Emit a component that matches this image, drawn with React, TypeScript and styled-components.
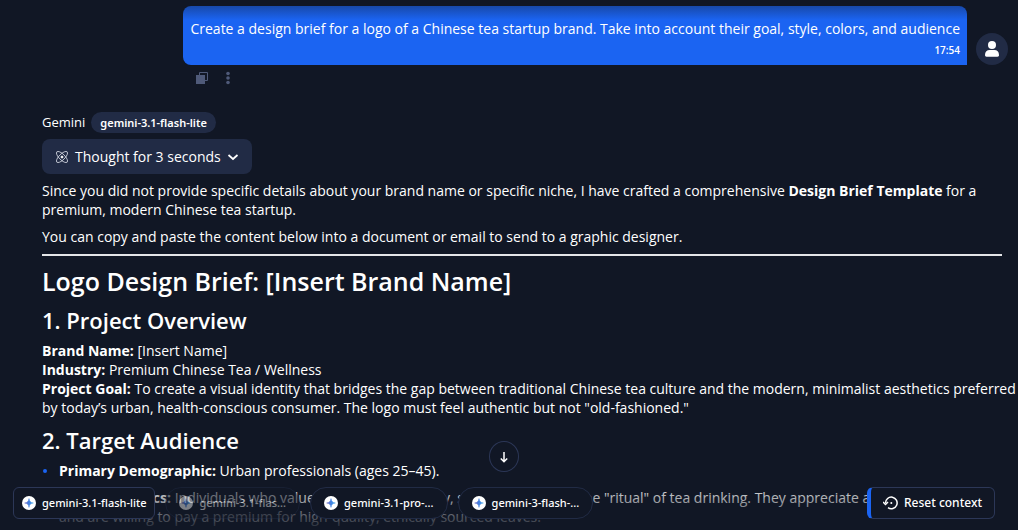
import React from "react";
import styled, { createGlobalStyle } from "styled-components";

const GlobalStyle = createGlobalStyle`
  *, *::before, *::after { box-sizing: border-box; }
  body {
    margin: 0;
    background: #111725;
    color: #fff;
    font: 400 14px/19px "Open Sans", "Noto Sans", sans-serif;
  }
  button { font: inherit; color: inherit; cursor: pointer; }
`;

const Page = styled.div`
  position: relative;
  height: 100vh;
  overflow: hidden;
  white-space: nowrap;
`;

const TopFade = styled.div`
  position: absolute;
  top: 0;
  left: 0;
  right: 0;
  height: 20px;
  background: linear-gradient(rgba(17, 23, 37, 0.5), rgba(17, 23, 37, 0));
  pointer-events: none;
`;

const UserRow = styled.section`
  display: flex;
  justify-content: flex-end;
  align-items: flex-start;
  gap: 9px;
  padding: 6px 10px 0 0;
`;

const Bubble = styled.div`
  display: flex;
  flex-direction: column;
  height: 59px;
  padding: 13px 7px 0;
  border-radius: 8px 8px 0 8px;
  background: #1b64f2;
`;

const Time = styled.time`
  align-self: flex-end;
  font-size: 10px;
  font-weight: 600;
  line-height: 25px;
`;

const Avatar = styled.div`
  display: flex;
  align-items: center;
  justify-content: center;
  width: 32px;
  height: 32px;
  margin-top: 27px;
  border-radius: 50%;
  background: #212b45;
`;

const Actions = styled.div`
  display: flex;
  gap: 16px;
  padding: 6px 0 0 13px;
`;

const IconButton = styled.button`
  display: flex;
  padding: 0;
  border: 0;
  background: none;
  color: #4f5a79;
`;

const Answer = styled.main`
  padding: 27px 16px 0 42px;
`;

const Author = styled.header`
  display: flex;
  align-items: center;
  gap: 6px;
  height: 21px;
  font-size: 13px;
`;

const ModelTag = styled.span`
  height: 21px;
  padding: 0 9px;
  border-radius: 11px;
  background: #212b45;
  font: 600 11px/21px "Noto Sans", sans-serif;
`;

const ThoughtButton = styled.button`
  display: flex;
  align-items: center;
  gap: 6px;
  height: 35px;
  margin: 6px 0 7px;
  padding: 0 13px;
  border: 0;
  border-radius: 8px;
  background: #212b45;
`;

const Paragraph = styled.p`
  margin: 0 0 8px;
`;

const Rule = styled.hr`
  height: 2px;
  margin: 0;
  border: 0;
  background: #e4e5e8;
`;

const Title = styled.h1`
  margin: 8px 0 0;
  font-size: 25px;
  font-weight: 600;
  line-height: 34px;
`;

const Heading = styled.h2`
  margin: 7px 0 6px;
  font-size: 22px;
  font-weight: 600;
  line-height: 30px;
`;

const List = styled.ul`
  margin: 0;
  padding: 0;
  list-style: none;
`;

const Item = styled.li`
  position: relative;
  margin-bottom: 8px;
  padding-left: 17px;

  &::before {
    content: "";
    position: absolute;
    top: 8px;
    left: 1px;
    width: 4px;
    height: 4px;
    border-radius: 50%;
    background: #1b64f2;
  }
`;

const BottomFade = styled.div`
  position: absolute;
  left: 0;
  right: 0;
  bottom: 0;
  height: 50px;
  background: linear-gradient(rgba(17, 23, 37, 0), rgba(17, 23, 37, 0.95));
  pointer-events: none;
`;

const ScrollDown = styled.button`
  position: absolute;
  left: calc(50% - 20px);
  bottom: 58px;
  display: flex;
  align-items: center;
  justify-content: center;
  width: 30px;
  height: 31px;
  padding: 0;
  border: 1px solid #2c3757;
  border-radius: 50%;
  background: #111725;
`;

const Footer = styled.footer`
  position: absolute;
  left: 13px;
  right: 23px;
  bottom: 11px;
  display: flex;
  align-items: center;
  justify-content: space-between;
`;

const Models = styled.nav`
  display: flex;
  gap: 10px;
`;

const Chip = styled.button<{ $active?: boolean; $faded?: boolean }>`
  display: flex;
  align-items: center;
  gap: 6px;
  height: 32px;
  padding: 0 ${(p) => (p.$active ? 8 : 13)}px;
  border: 1px solid ${(p) => (p.$active ? "#2c3757" : "#212b45")};
  border-radius: ${(p) => (p.$active ? 6 : 16)}px;
  background: #111725;
  font: 500 11px/16px "Noto Sans", sans-serif;
  opacity: ${(p) => (p.$faded ? 0.45 : 1)};
`;

const ResetButton = styled.button`
  display: flex;
  align-items: center;
  gap: 6px;
  height: 32px;
  padding: 0 12px;
  border: 1px solid #2c3757;
  border-left: 4px solid #1b64f2;
  border-radius: 6px;
  background: #111725;
  font: 500 12px/16px "Noto Sans", sans-serif;
`;

const GeminiMark = () => (
  <svg width="14" height="14" viewBox="0 0 14 14" aria-hidden="true">
    <defs>
      <linearGradient id="spark" x1="0" y1="0" x2="1" y2="0">
        <stop offset="0" stopColor="#7a6fc4" />
        <stop offset="0.5" stopColor="#3f7fe0" />
        <stop offset="1" stopColor="#4fb0ee" />
      </linearGradient>
    </defs>
    <circle cx="7" cy="7" r="7" fill="#fff" />
    <path d="M7 2.600C7.400 5.400 8.600 6.600 11.400 7C8.600 7.400 7.400 8.600 7 11.400C6.600 8.600 5.400 7.400 2.600 7C5.400 6.600 6.600 5.400 7 2.600Z" fill="url(#spark)" stroke="url(#spark)" strokeWidth="0.5" />
  </svg>
);

const models = [
  { label: "gemini-3.1-flash-lite", active: true },
  { label: "gemini-3.1-flas...", faded: true },
  { label: "gemini-3.1-pro-..." },
  { label: "gemini-3-flash-..." },
];

export default function App() {
  return (
    <Page>
      <GlobalStyle />
      <UserRow>
        <div>
          <Bubble>
            <span>Create a design brief for a logo of a Chinese tea startup brand. Take into account their goal, style, colors, and audience</span>
            <Time>17:54</Time>
          </Bubble>
          <Actions>
            <IconButton aria-label="Copy">
              <svg width="12" height="14" viewBox="0 0 12 14">
                <path d="M0 4h9v9H0z" fill="currentColor" />
                <path d="M3.500 4V1.500h8v8H9" fill="none" stroke="currentColor" />
              </svg>
            </IconButton>
            <IconButton aria-label="More">
              <svg width="8" height="14" viewBox="0 0 8 14" fill="currentColor">
                <circle cx="4" cy="2.500" r="1.800" />
                <circle cx="4" cy="7" r="1.800" />
                <circle cx="4" cy="11.500" r="1.800" />
              </svg>
            </IconButton>
          </Actions>
        </div>
        <Avatar>
          <svg width="14" height="16" viewBox="0 0 14 16" fill="#fff" aria-hidden="true">
            <circle cx="7" cy="4" r="4" />
            <path d="M0 14c0-3.300 2-5 4.500-5h5C12 9 14 10.700 14 14c0 1-.5 1.700-1.500 1.700h-11C.5 15.700 0 15 0 14z" />
          </svg>
        </Avatar>
      </UserRow>

      <Answer>
        <Author>
          Gemini <ModelTag>gemini-3.1-flash-lite</ModelTag>
        </Author>
        <ThoughtButton>
          <svg width="14" height="14" viewBox="0 0 14 14" fill="none" stroke="#c3c7d3" strokeWidth="0.900" aria-hidden="true">
            <ellipse cx="7" cy="7" rx="7.300" ry="2.900" transform="rotate(45 7 7)" />
            <ellipse cx="7" cy="7" rx="7.300" ry="2.900" transform="rotate(-45 7 7)" />
            <circle cx="7" cy="7" r="1" fill="#fff" stroke="#fff" />
          </svg>
          Thought for 3 seconds
          <svg width="12" height="12" viewBox="0 0 12 12" fill="none" stroke="#fff" strokeWidth="1.700" aria-hidden="true">
            <path d="M1.500 4L6 8L10.500 4" />
          </svg>
        </ThoughtButton>

        <Paragraph>
          Since you did not provide specific details about your brand name or specific niche, I have crafted a comprehensive <strong>Design Brief Template</strong> for a<br />
          premium, modern Chinese tea startup.
        </Paragraph>
        <Paragraph>You can copy and paste the content below into a document or email to send to a graphic designer.</Paragraph>
        <Rule />
        <Title>Logo Design Brief: [Insert Brand Name]</Title>
        <Heading>1. Project Overview</Heading>
        <Paragraph>
          <strong>Brand Name:</strong> [Insert Name]<br />
          <strong>Industry:</strong> Premium Chinese Tea / Wellness<br />
          <strong>Project Goal:</strong> To create a visual identity that bridges the gap between traditional Chinese tea culture and the modern, minimalist aesthetics preferred<br />
          by today’s urban, health-conscious consumer. The logo must feel authentic but not "old-fashioned."
        </Paragraph>
        <Heading>2. Target Audience</Heading>
        <List>
          <Item>
            <strong>Primary Demographic:</strong> Urban professionals (ages 25–45).
          </Item>
          <Item>
            <strong>Psychographics:</strong> Individuals who value mindfulness, quality, sustainability, and the "ritual" of tea drinking. They appreciate aesthetics<br />
            and are willing to pay a premium for high-quality, ethically sourced leaves.
          </Item>
        </List>
      </Answer>

      <TopFade />
      <BottomFade />
      <ScrollDown aria-label="Scroll to bottom">
        <svg width="12" height="12" viewBox="0 0 12 12" fill="none" stroke="#fff" strokeWidth="1.500">
          <path d="M6 1V10.500M2.800 7.500L6 10.700L9.200 7.500" />
        </svg>
      </ScrollDown>
      <Footer>
        <Models aria-label="Models">
          {models.map((m) => (
            <Chip key={m.label} $active={m.active} $faded={m.faded}>
              <GeminiMark />
              {m.label}
            </Chip>
          ))}
        </Models>
        <ResetButton>
          <svg width="15" height="14" viewBox="0 0 15 14" fill="none" stroke="#fff" strokeWidth="1.500" aria-hidden="true">
            <path d="M2.500 7A5.800 5.800 0 1 1 5 11.700" />
            <path d="M0 6L2.500 8.500L5 6" />
            <circle cx="8.300" cy="7" r="1" fill="#fff" stroke="none" />
          </svg>
          Reset context
        </ResetButton>
      </Footer>
    </Page>
  );
}
